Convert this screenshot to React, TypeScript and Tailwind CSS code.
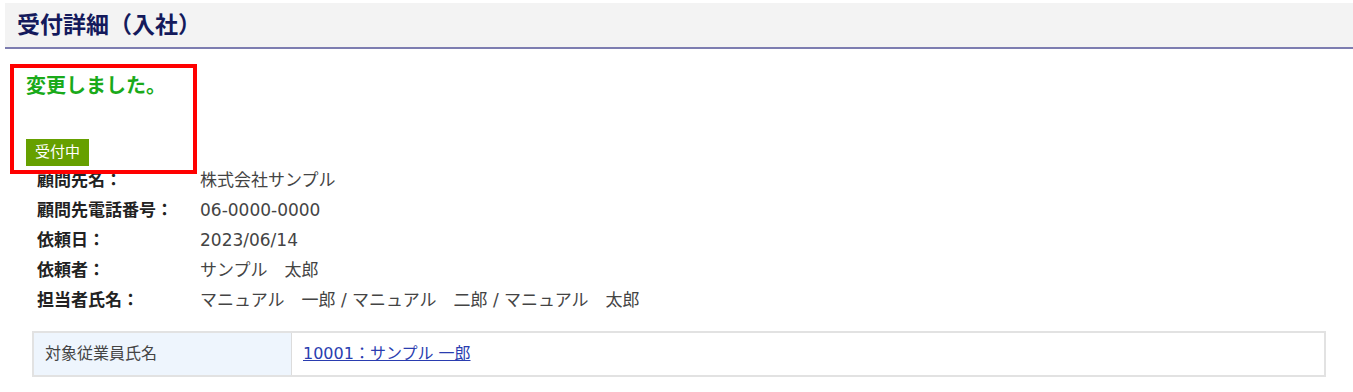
const rows = [
  { label: "顧問先名：", value: "株式会社サンプル" },
  { label: "顧問先電話番号：", value: "06-0000-0000" },
  { label: "依頼日：", value: "2023/06/14" },
  { label: "依頼者：", value: "サンプル　太郎" },
  { label: "担当者氏名：", value: "マニュアル　一郎 / マニュアル　二郎 / マニュアル　太郎" },
];

export default function App() {
  return (
    <div
      className="relative w-[1353px] h-[392px] bg-white text-[#333]"
      style={{ fontFamily: '"DejaVu Sans", "Noto Sans CJK JP", sans-serif' }}
    >
      <div className="pt-[3px] pl-[5px]">
        <div className="h-[46px] bg-[#f3f3f3] border-b-2 border-[#7d7db0] flex items-center pl-[12px]">
          <h1 className="text-[23px] font-bold text-[#141a5c] leading-none">受付詳細（入社）</h1>
        </div>
      </div>

      <div className="pl-[26px] pt-[25px]">
        <p className="text-[20px] font-bold text-[#1aaa1a] leading-[25px]">変更しました。</p>
        <div className="mt-[40px] inline-flex items-center h-[27px] px-[9px] bg-[#66a000] text-white text-[15px] leading-none">
          受付中
        </div>
      </div>

      <div className="pl-[37px] flex flex-col">
        {rows.map((r) => (
          <div key={r.label} className="flex h-[30px] items-center text-[17px]">
            <div className="w-[163px] font-bold text-[#222]">{r.label}</div>
            <div className="text-[#444]">{r.value}</div>
          </div>
        ))}
      </div>

      <div className="ml-[32px] mr-[27px] mt-[15px] flex border-2 border-[#e2e2e2] h-[46px] text-[16px]">
        <div className="w-[258px] bg-[#eef5fd] border-r border-[#dcdcdc] flex items-center pl-[11px] text-[#444]">
          対象従業員氏名
        </div>
        <div className="flex-1 flex items-center pl-[11px]">
          <a href="#" className="text-[#2a3db0] underline">10001：サンプル 一郎</a>
        </div>
      </div>

      <div className="absolute left-[10px] top-[64px] w-[187px] h-[110px] border-4 border-[#ff0000] pointer-events-none" />
    </div>
  );
}
